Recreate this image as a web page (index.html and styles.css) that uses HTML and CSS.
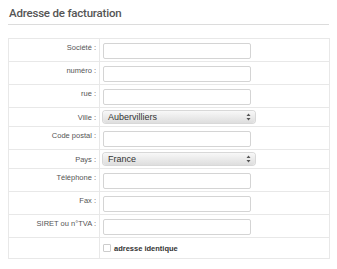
FILE: index.html
```html
<!DOCTYPE html>
<html>
<head>
    <meta charset="UTF-8">
    <title>Adresse de facturation</title>
    <link rel="stylesheet" href="styles.css">
</head>
<body>
<div class="billing">
    <h2>Adresse de facturation</h2>
    <table class="form-table">
        <tr class="input-row">
            <td class="label">Société :</td>
            <td class="field"><input type="text" class="text-input"></td>
        </tr>
        <tr class="input-row">
            <td class="label">numéro :</td>
            <td class="field"><input type="text" class="text-input"></td>
        </tr>
        <tr class="input-row">
            <td class="label">rue :</td>
            <td class="field"><input type="text" class="text-input"></td>
        </tr>
        <tr class="select-row">
            <td class="label">Ville :</td>
            <td class="field">
                <div class="select">
                    <span>Aubervilliers</span>
                    <svg width="5" height="8" viewBox="0 0 5 8"><path d="M2.5 0.5L4.5 3H0.5Z M2.5 7.5L4.5 5H0.5Z" fill="#555"/></svg>
                </div>
            </td>
        </tr>
        <tr class="input-row">
            <td class="label">Code postal :</td>
            <td class="field"><input type="text" class="text-input"></td>
        </tr>
        <tr class="select-row">
            <td class="label">Pays :</td>
            <td class="field">
                <div class="select">
                    <span>France</span>
                    <svg width="5" height="8" viewBox="0 0 5 8"><path d="M2.5 0.5L4.5 3H0.5Z M2.5 7.5L4.5 5H0.5Z" fill="#555"/></svg>
                </div>
            </td>
        </tr>
        <tr class="input-row">
            <td class="label">Téléphone :</td>
            <td class="field"><input type="text" class="text-input"></td>
        </tr>
        <tr class="input-row">
            <td class="label">Fax :</td>
            <td class="field"><input type="text" class="text-input"></td>
        </tr>
        <tr class="input-row">
            <td class="label">SIRET ou n°TVA :</td>
            <td class="field"><input type="text" class="text-input"></td>
        </tr>
        <tr class="check-row">
            <td class="label"></td>
            <td class="field">
                <label class="check"><span class="box"></span>adresse identique</label>
            </td>
        </tr>
    </table>
</div>
</body>
</html>
```

FILE: styles.css
```css
body {
    margin: 0;
    font-family: "Liberation Sans", Arial, sans-serif;
    background: #fff;
}

.billing {
    padding: 6px 8px 0 8px;
}

h2 {
    font-family: Roboto, "Liberation Sans", sans-serif;
    font-size: 11.5px;
    font-weight: 500;
    letter-spacing: -0.2px;
    color: #555;
    margin: 0 0 13px 0;
    padding: 0 0 4px 1px;
    border-bottom: 1px solid #dcdcdc;
}

.form-table {
    width: 322px;
    border-collapse: collapse;
    border: 1px solid #e8e8e8;
}

.form-table td {
    border: 1px solid #e8e8e8;
    padding: 0;
}

.input-row {
    height: 23px;
}

.select-row {
    height: 19px;
}

.check-row {
    height: 21px;
}

.label {
    width: 87px;
    text-align: right;
    vertical-align: top;
    font-size: 7.5px;
    line-height: 9px;
    color: #555;
    padding: 4px 3px 0 0 !important;
}

.field {
    padding: 0 0 0 3px !important;
    vertical-align: middle;
}

.text-input {
    display: block;
    width: 148px;
    height: 16px;
    box-sizing: border-box;
    border: 1px solid #d4d4d4;
    border-radius: 2px;
    margin: 2px 0 0 0;
}

.select-row .label {
    padding-top: 5px !important;
}

.select {
    display: flex;
    align-items: center;
    justify-content: space-between;
    width: 152px;
    height: 12px;
    box-sizing: border-box;
    padding: 0 4px 0 5px;
    border-radius: 3px;
    background: linear-gradient(#f8f8f8, #dedede);
    box-shadow: 0 0 0 1px #d8d8d8;
    font-size: 9px;
    color: #333;
}

.check {
    display: flex;
    align-items: center;
    gap: 3px;
    font-size: 7.5px;
    font-weight: bold;
    color: #333;
}

.box {
    width: 6px;
    height: 6px;
    border: 1px solid #ccc;
    border-radius: 1px;
}
```
